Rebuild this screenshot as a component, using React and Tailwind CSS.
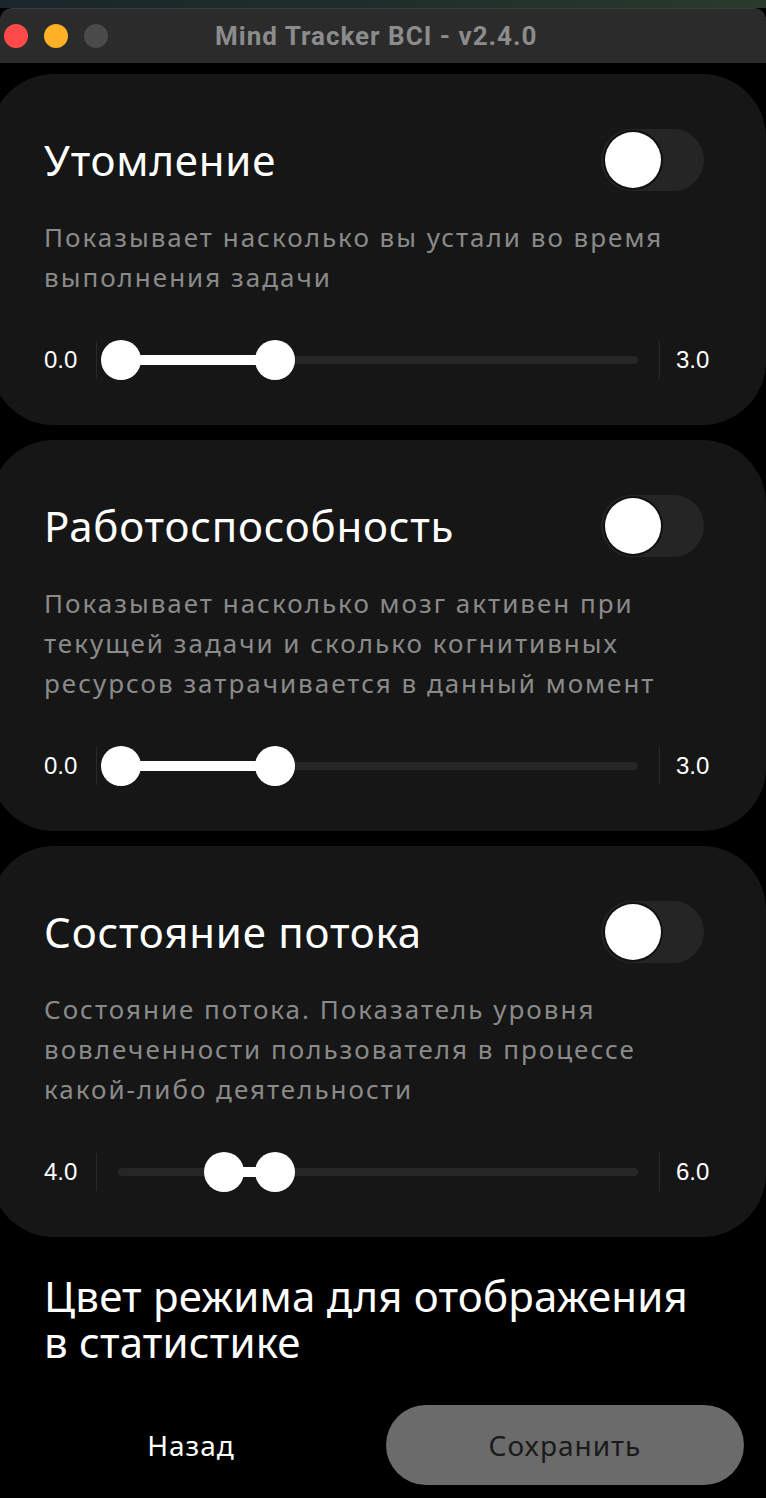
import React from "react";

const FONT = { fontFamily: '"Noto Sans", "DejaVu Sans", sans-serif' };
const NUM_FONT = { fontFamily: '"Liberation Sans", Arial, sans-serif' };

const modes = [
  {
    title: "Утомление",
    desc: ["Показывает насколько вы устали во время", "выполнения задачи"],
    min: "0.0",
    max: "3.0",
    from: 4,
    to: 158,
  },
  {
    title: "Работоспособность",
    desc: [
      "Показывает насколько мозг активен при",
      "текущей задачи и сколько когнитивных",
      "ресурсов затрачивается в данный момент",
    ],
    min: "0.0",
    max: "3.0",
    from: 4,
    to: 158,
  },
  {
    title: "Состояние потока",
    desc: [
      "Состояние потока. Показатель уровня",
      "вовлеченности пользователя в процессе",
      "какой-либо деятельности",
    ],
    min: "4.0",
    max: "6.0",
    from: 107,
    to: 158,
  },
];

function Toggle() {
  return (
    <div className="relative w-[103px] h-[62px] rounded-full bg-[#252525] shrink-0">
      <div className="absolute left-[4px] top-[3px] w-[56px] h-[56px] rounded-full bg-white shadow-[0_0_0_2px_#111]" />
    </div>
  );
}

function RangeSlider({ min, max, from, to }) {
  return (
    <div className="flex items-center h-[40px] mr-[-8px]" style={NUM_FONT}>
      <span className="w-[34px] text-[24px] text-white leading-none">{min}</span>
      <div className="ml-[18px] w-[1px] h-[38px] bg-[#2a2a2a]" />
      <div className="relative flex-1 h-[40px] flex items-center">
        <div className="mx-[21px] flex-1 h-[8px] rounded-full bg-[#262626]" />
        <div
          className="absolute top-[15px] h-[10px] bg-white"
          style={{ left: from + 20, width: to - from }}
        />
        <div
          className="absolute top-0 w-[40px] h-[40px] rounded-full bg-white"
          style={{ left: from }}
        />
        <div
          className="absolute top-0 w-[40px] h-[40px] rounded-full bg-white"
          style={{ left: to }}
        />
      </div>
      <div className="w-[1px] h-[38px] bg-[#2a2a2a]" />
      <span className="ml-[16px] w-[36px] text-[24px] text-white leading-none">{max}</span>
    </div>
  );
}

function ModeCard({ mode }) {
  return (
    <div className="-ml-[10px] w-[776px] rounded-[64px] bg-[#161616] pl-[54px] pr-[62px] pt-[55px] pb-[45px]">
      <div className="flex items-center justify-between h-[62px]">
        <h2 className="text-[42px] text-white leading-none tracking-[0.8px]">{mode.title}</h2>
        <Toggle />
      </div>
      <p className="mt-[26px] text-[26px] leading-[40px] text-[#8a8a8a] tracking-[2px]">
        {mode.desc.map((line, i) => (
          <span key={i} className="block whitespace-nowrap">
            {line}
          </span>
        ))}
      </p>
      <div className="mt-[43px]">
        <RangeSlider {...mode} />
      </div>
    </div>
  );
}

export default function App() {
  return (
    <div className="w-[766px] h-[1498px] bg-black overflow-hidden flex flex-col" style={FONT}>
      {/* desktop strip behind the window */}
      <div className="h-[8px] shrink-0 bg-gradient-to-r from-[#1a262a] via-[#1f2e2a] to-[#2a3a2c]" />
      <div className="bg-black rounded-t-[12px] overflow-hidden flex-1 flex flex-col">
        {/* title bar */}
        <div className="h-[55px] shrink-0 bg-[#2b2b2b] flex items-center pl-[4px] border-t border-[#3a3a3a] rounded-t-[12px]">
          <div className="flex items-center gap-[16px]">
            <span className="w-[24px] h-[24px] rounded-full bg-[#fe4b49]" />
            <span className="w-[24px] h-[24px] rounded-full bg-[#fdb127]" />
            <span className="w-[24px] h-[24px] rounded-full bg-[#4a4a4a]" />
          </div>
          <span
            className="ml-[107px] text-[26px] font-bold text-[#8c8c8c] leading-none tracking-[1px]"
            style={{ fontFamily: '"Roboto", "Liberation Sans", sans-serif' }}
          >
            Mind Tracker BCI - v2.4.0
          </span>
        </div>

        {/* mode cards */}
        <div className="flex flex-col gap-[15px] pt-[11px]">
          {modes.map((m) => (
            <ModeCard key={m.title} mode={m} />
          ))}
        </div>

        <h3 className="mt-[36px] ml-[44px] w-[660px] text-[42px] leading-[46px] text-white tracking-[0.2px]">
          Цвет режима для отображения в статистике
        </h3>

        <div className="mt-[40px] flex items-center pl-[12px] gap-[16px]">
          <button className="w-[358px] h-[80px] text-[28px] text-white tracking-[1px]">Назад</button>
          <button className="w-[358px] h-[80px] rounded-full bg-[#6b6b6b] text-[28px] text-[#1a1a1a] tracking-[1px]">
            Сохранить
          </button>
        </div>
      </div>
    </div>
  );
}
